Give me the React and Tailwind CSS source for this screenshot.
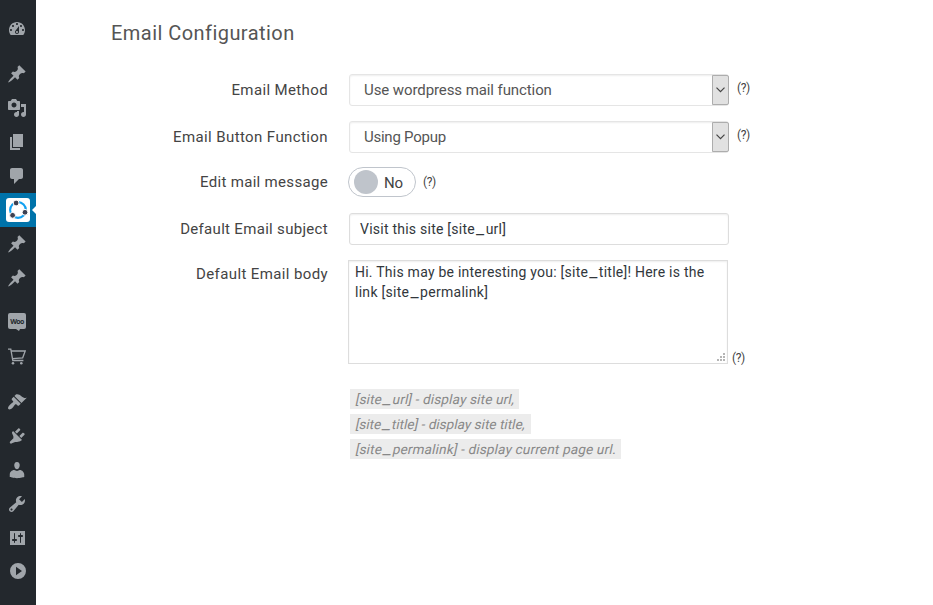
import React from "react";

const paths = {
  dashboard:
    "M3.76 16h12.48c1.1-1.37 1.76-3.11 1.76-5 0-4.42-3.58-8-8-8s-8 3.58-8 8c0 1.89.66 3.63 1.76 5zM10 4c.55 0 1 .45 1 1s-.45 1-1 1-1-.45-1-1 .45-1 1-1zM6 6c.55 0 1 .45 1 1s-.45 1-1 1-1-.45-1-1 .45-1 1-1zm8 0c.55 0 1 .45 1 1s-.45 1-1 1-1-.45-1-1 .45-1 1-1zm-5.37 5.55L12 7v6c0 1.1-.9 2-2 2s-2-.9-2-2c0-.57.24-1.08.63-1.45zM4 10c.55 0 1 .45 1 1s-.45 1-1 1-1-.45-1-1 .45-1 1-1zm12 0c.55 0 1 .45 1 1s-.45 1-1 1-1-.45-1-1 .45-1 1-1zm-5 3c0-.55-.45-1-1-1s-1 .45-1 1 .45 1 1 1 1-.45 1-1z",
  pin: "M10.44 3.02l1.82-1.82 6.36 6.35-1.83 1.82c-1.05-.68-2.48-.57-3.41.36l-.75.75c-.92.93-1.04 2.35-.35 3.41l-1.83 1.82-2.41-2.41-2.8 2.79c-.42.42-3.38 2.71-3.8 2.29s1.86-3.39 2.28-3.81l2.79-2.79L4.1 9.36l1.83-1.82c1.05.69 2.48.57 3.4-.36l.75-.75c.93-.92 1.05-2.35.36-3.41z",
  media:
    "M13 11V4c0-.55-.45-1-1-1h-1.67L9 1H5L3.67 3H2c-.55 0-1 .45-1 1v7c0 .55.45 1 1 1h10c.55 0 1-.45 1-1zM7 4.5c1.38 0 2.5 1.12 2.5 2.5S8.38 9.5 7 9.5 4.5 8.38 4.5 7 5.62 4.5 7 4.5zM14 6h5v10.5c0 1.38-1.12 2.5-2.5 2.5S14 17.88 14 16.5s1.12-2.5 2.5-2.5c.17 0 .34.02.5.05V9h-3V6zm-4 8.05V13h2v3.5c0 1.38-1.12 2.5-2.5 2.5S7 17.88 7 16.5 8.12 14 9.5 14c.17 0 .34.02.5.05z",
  page: "M6 15V2h10v13H6zm-1 1h8v2H3V5h2v11z",
  comment:
    "M5 2h9c1.1 0 2 .9 2 2v7c0 1.1-.9 2-2 2h-2l-5 5v-5H5c-1.1 0-2-.9-2-2V4c0-1.1.9-2 2-2z",
  brush:
    "M14.48 11.06L7.41 3.99l1.5-1.5c.5-.56 2.3-.47 3.51.32 1.21.8 1.43 1.28 2.91 2.1 1.18.64 2.45 1.26 4.45.85zm-.71.71L6.7 4.7 4.93 6.47c-.39.39-.39 1.02 0 1.41l1.06 1.06c.39.39.39 1.03 0 1.42-.6.6-1.43 1.11-2.21 1.69-.35.26-.7.53-1.01.84C1.43 14.23.4 16.08 1.4 17.07c.99 1 2.84-.03 4.18-1.36.31-.31.58-.66.85-1.02.57-.78 1.08-1.61 1.69-2.21.39-.39 1.02-.39 1.41 0l1.06 1.06c.39.39 1.02.39 1.41 0z",
  plug: "M13.11 4.36L9.87 7.6 8 5.73l3.24-3.24c.35-.34 1.05-.2 1.56.32.52.51.66 1.21.31 1.55zm-8 1.77l.91-1.12 9.01 9.01-1.19.84c-.71.71-2.63 1.16-3.82 1.16H8.14L4.9 17.26c-.49.49-1.27.49-1.76 0s-.49-1.27 0-1.76l3.24-3.24v-1.88c0-1.18-1.98-3.53-1.27-4.25zm7.26 3.97l3.24-3.24c.34-.35 1.04-.21 1.55.31.52.51.66 1.21.31 1.55l-3.24 3.25z",
  user: "M10 9.25c-2.27 0-2.73-3.44-2.73-3.44C7 4.02 7.82 2 9.97 2c2.16 0 2.98 2.02 2.71 3.81 0 0-.41 3.44-2.68 3.44zM10 11.1L12.72 10c2.39 0 4.52 2.33 4.52 4.53v2.49s-3.65 1.13-7.24 1.13c-3.65 0-7.24-1.13-7.24-1.13v-2.49c0-2.25 1.94-4.48 4.47-4.48z",
  wrench:
    "M16.68 9.77c-1.34 1.34-3.3 1.67-4.95.99l-5.41 6.52c-.99.99-2.59.99-3.58 0s-.99-2.59 0-3.57l6.52-5.42c-.68-1.65-.35-3.61.99-4.95 1.28-1.28 3.12-1.62 4.72-1.06l-2.89 2.89 2.82 2.82 2.86-2.87c.53 1.58.18 3.39-1.08 4.65zM3.81 16.21c.4.39 1.04.39 1.43 0 .4-.4.4-1.04 0-1.43-.39-.4-1.03-.4-1.43 0-.39.39-.39 1.03 0 1.43z",
  sliders:
    "M18 17V3H3v14h15zM8 11h1c.55 0 1 .45 1 1s-.45 1-1 1H8v1.5c0 .28-.22.5-.5.5s-.5-.22-.5-.5V13H6c-.55 0-1-.45-1-1s.45-1 1-1h1V5.5c0-.28.22-.5.5-.5s.5.22.5.5V11zm5-2h-1c-.55 0-1-.45-1-1s.45-1 1-1h1V5.5c0-.28.22-.5.5-.5s.5.22.5.5V7h1c.55 0 1 .45 1 1s-.45 1-1 1h-1v5.5c0 .28-.22.5-.5.5s-.5-.22-.5-.5V9z",
  play: "M11 2a8 8 0 1 0 0 16 8 8 0 0 0 0-16zM9 5.8l6 4.2-6 4.2z",
};

function MenuItem({ icon }) {
  return (
    <div className="flex h-[34px] items-center pl-[7px]">
      <svg viewBox="0 0 20 20" className="size-5 fill-[#a0a5aa]">
        <path fillRule="evenodd" d={paths[icon]} />
      </svg>
    </div>
  );
}

function ActiveItem() {
  return (
    <div className="relative flex h-[34px] items-center bg-[#0073aa] pl-1.5">
      <svg viewBox="0 0 24 24" className="size-6">
        <rect width="24" height="24" rx="3" fill="#fff" />
        <circle cx="12" cy="12" r="7.9" fill="none" stroke="#12a0f0" strokeWidth="2.1" />
        <g fill="#3d4152" stroke="#fff" strokeWidth="1">
          <circle cx="10.1" cy="5" r="2.9" />
          <circle cx="19" cy="14.3" r="2.9" />
          <circle cx="6.6" cy="17.3" r="2.9" />
        </g>
      </svg>
      <svg viewBox="0 0 4 8" className="absolute top-[13px] right-0 h-2 w-1">
        <path d="M4 0v8L0 4z" fill="#fff" />
      </svg>
    </div>
  );
}

function Sidebar() {
  return (
    <aside className="w-9 shrink-0 bg-[#23282d] pt-3">
      <MenuItem icon="dashboard" />
      <div className="h-[11px]" />
      <MenuItem icon="pin" />
      <MenuItem icon="media" />
      <MenuItem icon="page" />
      <MenuItem icon="comment" />
      <ActiveItem />
      <MenuItem icon="pin" />
      <MenuItem icon="pin" />
      <div className="h-[10px]" />
      <div className="flex h-[34px] items-start pt-2 pl-2">
        <div className="relative flex h-4 w-[18px] items-center justify-center rounded-[2px] bg-[#a0a5aa] font-['Open_Sans'] text-[7px] leading-none font-bold tracking-[-0.6px] text-[#23282d]">
          Woo
          <svg viewBox="0 0 4 2" className="absolute top-4 left-2 h-0.5 w-1">
            <path d="M0 0h4L3 2z" fill="#a0a5aa" />
          </svg>
        </div>
      </div>
      <div className="flex h-[34px] items-center pl-2">
        <svg viewBox="0 0 18 17" className="h-[17px] w-[18px]" fill="none" stroke="#a0a5aa" strokeWidth="1.3">
          <path d="M0 1.2h2.8l2 11.3h10.6M3.4 3h13.8l-2.5 6.8-10.2.9" />
          <circle cx="5" cy="15.3" r="1.3" fill="#a0a5aa" stroke="none" />
          <circle cx="13.3" cy="15.3" r="1.3" fill="#a0a5aa" stroke="none" />
        </svg>
      </div>
      <div className="h-3" />
      <MenuItem icon="brush" />
      <MenuItem icon="plug" />
      <MenuItem icon="user" />
      <MenuItem icon="wrench" />
      <MenuItem icon="sliders" />
      <div className="-mt-px">
        <MenuItem icon="play" />
      </div>
    </aside>
  );
}

function Row({ label, className, labelClass, children }) {
  return (
    <div className={"flex " + className}>
      <div className={"w-[292px] shrink-0 text-right text-[15px] leading-5 whitespace-nowrap text-[#444] " + labelClass}>
        {label}
      </div>
      {children}
    </div>
  );
}

function Help({ className }) {
  return <span className={"text-[12px] leading-4 tracking-[-0.4px] text-[#444] " + className}>(?)</span>;
}

function Select({ value, textClass }) {
  return (
    <div className="ml-[21px] flex h-8 w-[380px] items-stretch rounded-[3px] border border-[#e5e5e5] bg-white shadow-[inset_0_1px_2px_rgba(0,0,0,0.07)]">
      <span className={"flex-1 pl-3.5 text-[15px] leading-[30px] whitespace-nowrap text-[#555] " + textClass}>{value}</span>
      <span className="-mr-px flex w-[17px] items-center justify-center rounded-r-[2px] border border-[#adadad] bg-[#e1e1e1]">
        <svg viewBox="0 0 9 6" className="h-1.5 w-[9px]" fill="none" stroke="#444" strokeWidth="1.2">
          <path d="M.5.7l4 4 4-4" />
        </svg>
      </span>
    </div>
  );
}

/* Shortcode text with a wide underscore. */
function Code({ a, b }) {
  return (
    <>
      [{a}
      <span className="px-[1.2px] text-[18px] leading-none">_</span>
      {b}]
    </>
  );
}

function Hint({ className, children }) {
  return (
    <div className={"h-5 bg-[#ececec] pl-1.5 " + className}>
      <span className="inline-block -skew-x-12">{children}</span>
    </div>
  );
}

export default function App() {
  return (
    <div className="flex h-[605px] w-[933px] overflow-hidden bg-white font-['Roboto',sans-serif]">
      <Sidebar />
      <main className="flex-1">
        <h1 className="mt-[19px] ml-[75px] text-[20px] leading-7 tracking-[0.45px] text-[#555]">Email Configuration</h1>

        <Row label="Email Method" className="mt-[27px] h-8" labelClass="pt-1.5 tracking-[0.37px]">
          <Select value="Use wordpress mail function" textClass="tracking-[-0.09px]" />
          <Help className="ml-2 pt-1.5" />
        </Row>
        <Row label="Email Button Function" className="mt-[15px] h-8" labelClass="pt-1.5 tracking-[0.4px]">
          <Select value="Using Popup" textClass="tracking-[-0.25px]" />
          <Help className="ml-2 pt-1.5" />
        </Row>
        <Row label="Edit mail message" className="mt-3.5 h-[30px]" labelClass="pt-[5px] tracking-[0.32px]">
          <div className="ml-5 flex h-[30px] w-[68px] items-center rounded-full border border-[#c0c5cc] pl-[5px]">
            <span className="size-6 rounded-full bg-[#bfc4cb]" />
            <span className="ml-1.5 pt-0.5 text-[15px] leading-5 tracking-[-0.3px] text-[#444]">No</span>
          </div>
          <Help className="ml-[7px] pt-[7px]" />
        </Row>
        <Row label="Default Email subject" className="mt-4 h-8" labelClass="pt-1.5 tracking-[0.31px]">
          <div className="ml-[21px] h-8 w-[380px] rounded-[3px] border border-[#ddd] pl-2.5 text-[14px] leading-[30px] tracking-[0.24px] text-[#32373c] shadow-[inset_0_1px_2px_rgba(0,0,0,0.07)]">
            Visit this site <Code a="site" b="url" />
          </div>
        </Row>
        <Row label="Default Email body" className="mt-[15px] h-[104px]" labelClass="pt-1 tracking-[0.38px]">
          <div className="relative ml-5 h-[104px] w-[380px] border border-[#ddd] pt-px pl-1.5 text-[14px] leading-5 text-[#32373c] shadow-[inset_0_1px_2px_rgba(0,0,0,0.07)]">
            <div className="h-5 tracking-[0.24px] whitespace-nowrap">
              Hi. This may be interesting you: <Code a="site" b="title" />! Here is the
            </div>
            <div className="h-5 tracking-[0.28px] whitespace-nowrap">
              link <Code a="site" b="permalink" />
            </div>
            <svg viewBox="0 0 8 8" className="absolute right-0.5 bottom-0.5 size-2" fill="#b5b5b5">
              <path d="M6 0h2v2H6zM3 3h2v2H3zM6 3h2v2H6zM0 6h2v2H0zM3 6h2v2H3zM6 6h2v2H6z" />
            </svg>
          </div>
          <Help className="ml-1 pt-[90px]" />
        </Row>

        <div className="mt-[25px] ml-[314px] flex flex-col items-start gap-[5px] text-[13.5px] leading-5 whitespace-nowrap text-[#888]">
          <Hint className="w-[169px] tracking-[0.16px]">
            <Code a="site" b="url" /> - display site url,
          </Hint>
          <Hint className="w-[181px] tracking-[0.03px]">
            <Code a="site" b="title" /> - display site title,
          </Hint>
          <Hint className="w-[271px] tracking-[0.18px]">
            <Code a="site" b="permalink" /> - display current page url.
          </Hint>
        </div>
      </main>
    </div>
  );
}
